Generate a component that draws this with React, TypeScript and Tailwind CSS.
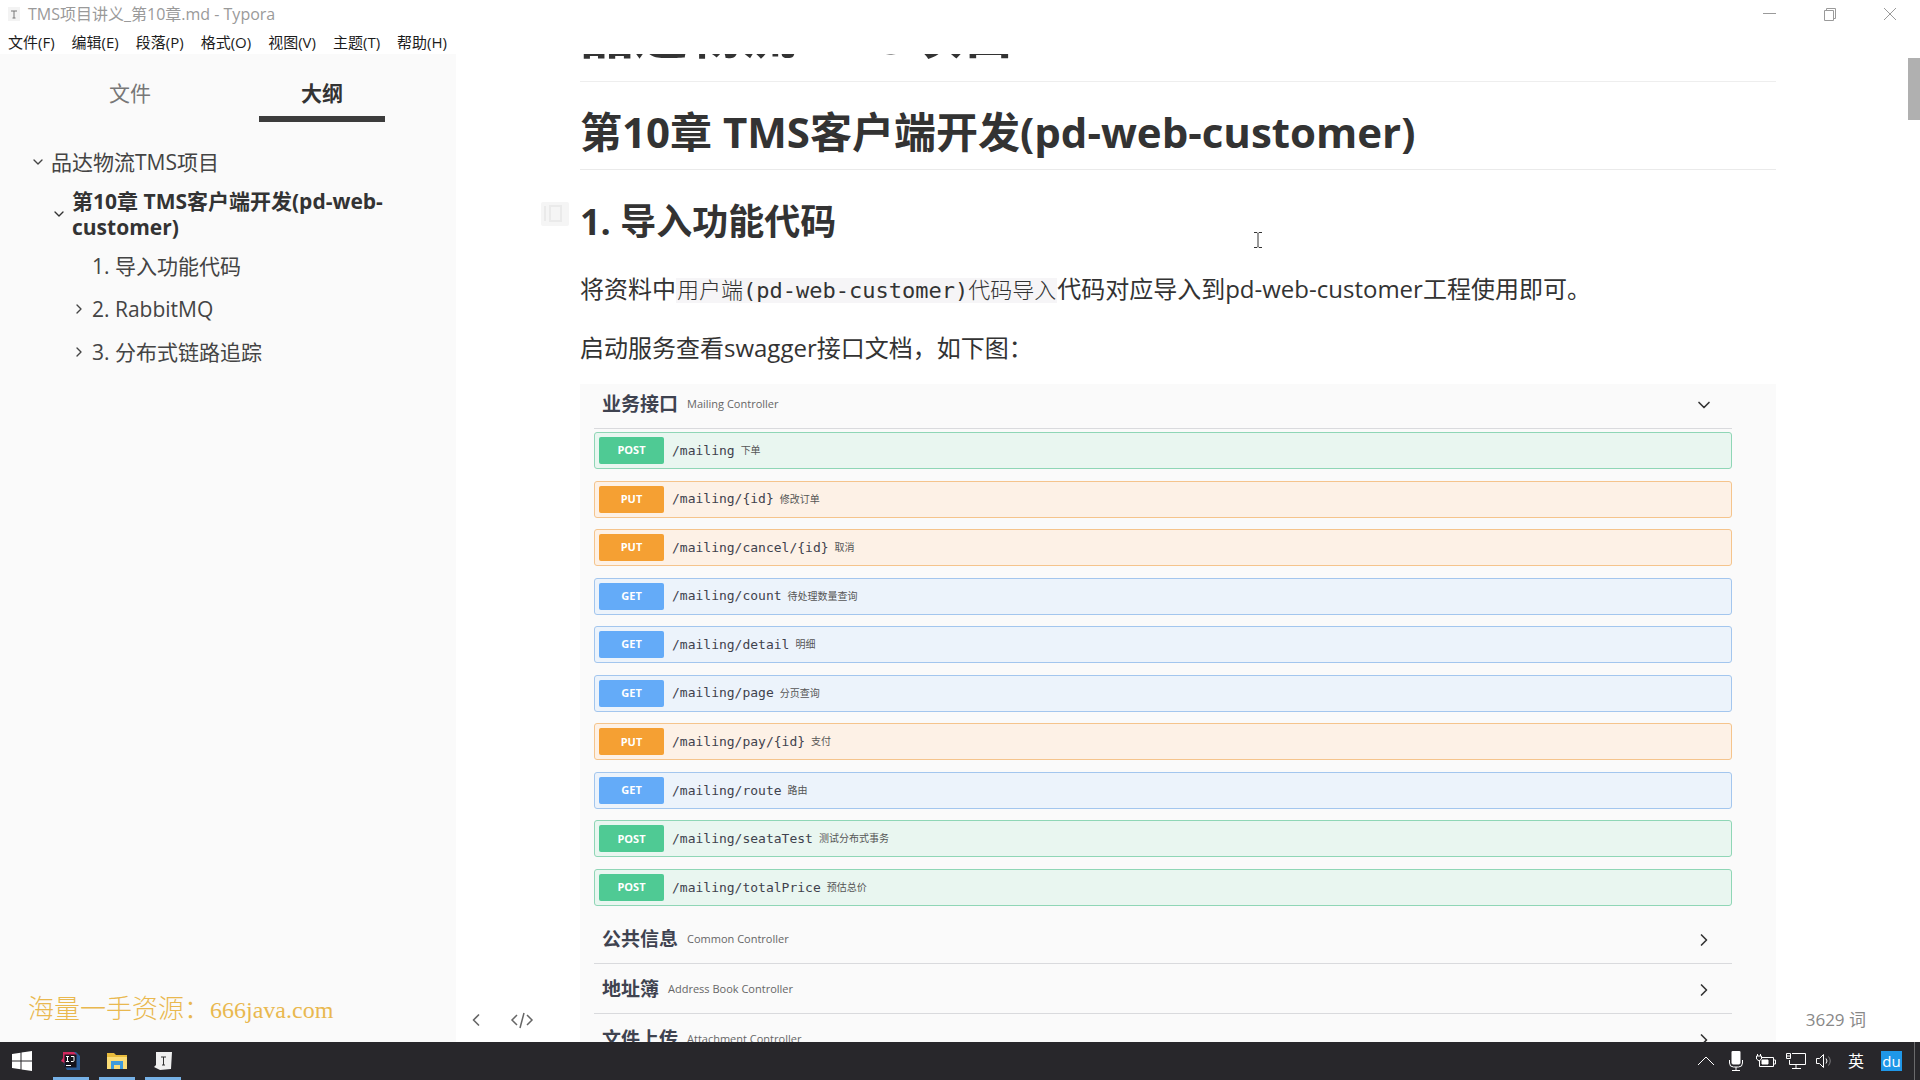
import type { ReactNode } from 'react';
import { ChevronDown, ChevronLeft, ChevronRight } from 'lucide-react';

type Method = 'POST' | 'PUT' | 'GET';

const MENUS = ['文件(F)', '编辑(E)', '段落(P)', '格式(O)', '视图(V)', '主题(T)', '帮助(H)'];

const ENDPOINTS: { method: Method; path: string; desc: string }[] = [
  { method: 'POST', path: '/mailing', desc: '下单' },
  { method: 'PUT', path: '/mailing/{id}', desc: '修改订单' },
  { method: 'PUT', path: '/mailing/cancel/{id}', desc: '取消' },
  { method: 'GET', path: '/mailing/count', desc: '待处理数量查询' },
  { method: 'GET', path: '/mailing/detail', desc: '明细' },
  { method: 'GET', path: '/mailing/page', desc: '分页查询' },
  { method: 'PUT', path: '/mailing/pay/{id}', desc: '支付' },
  { method: 'GET', path: '/mailing/route', desc: '路由' },
  { method: 'POST', path: '/mailing/seataTest', desc: '测试分布式事务' },
  { method: 'POST', path: '/mailing/totalPrice', desc: '预估总价' },
];

const ROW_STYLE: Record<Method, string> = {
  POST: 'border-[#8fd6b6] bg-[#e9f6f0]',
  PUT: 'border-[#f5c48c] bg-[#fdf1e6]',
  GET: 'border-[#a3c6ee] bg-[#ecf3fb]',
};

const BADGE_STYLE: Record<Method, string> = {
  POST: 'bg-[#4fca94]',
  PUT: 'bg-[#f5a033]',
  GET: 'bg-[#64abf8]',
};

function TitleBar() {
  return (
    <header className="flex h-[30px] shrink-0 items-center justify-between pb-0.5 pl-2 text-[#9a9a9a]">
      <div className="flex items-center gap-2">
        <svg className="h-4 w-3" viewBox="0 0 12 16" fill="none">
          <path d="M0 1h12v14H0z" fill="#f3f3f3" />
          <path d="M3 5h6M6 5v7M4.500 12h3" stroke="#777" />
        </svg>
        <span className="text-base">TMS项目讲义_第10章.md - Typora</span>
      </div>
      <div className="flex">
        <button aria-label="最小化" className="flex w-[60px] justify-center">
          <svg className="size-4" viewBox="0 0 16 16" fill="none" stroke="currentColor">
            <path d="M1 7.500h13" />
          </svg>
        </button>
        <button aria-label="还原" className="flex w-[60px] justify-center">
          <svg className="size-4" viewBox="0 0 16 16" fill="none" stroke="currentColor">
            <path d="M2.500 4.500h9v10h-9zM4.500 4.500v-2h9v10h-2" />
          </svg>
        </button>
        <button aria-label="关闭" className="flex w-[60px] justify-center">
          <svg className="size-4" viewBox="0 0 16 16" fill="none" stroke="currentColor">
            <path d="M2 2l12 12M14 2L2 14" />
          </svg>
        </button>
      </div>
    </header>
  );
}

function MenuBar() {
  return (
    <nav className="flex h-6 shrink-0 items-center gap-[17px] pl-2 text-[15px] text-[#1c1c1c]">
      {MENUS.map((menu) => (
        <button key={menu}>{menu}</button>
      ))}
    </nav>
  );
}

function OutlineItem({ indent, icon, children }: { indent: string; icon?: ReactNode; children: ReactNode }) {
  return (
    <li className={`flex items-center gap-1 ${indent}`}>
      <span className="flex w-[18px] shrink-0 justify-center">{icon}</span>
      <a href="#outline">{children}</a>
    </li>
  );
}

function Sidebar() {
  return (
    <aside className="relative w-[456px] shrink-0 bg-[#fafafa] text-[#444]">
      <div className="grid grid-cols-2 pt-[14px] pr-[38px] pl-[34px] text-[21px]">
        <button className="mx-[33px] h-[54px] border-b-[6px] border-transparent pt-1 text-[#777]">文件</button>
        <button className="mx-[33px] h-[54px] border-b-[6px] border-[#3c3c3c] pt-1 font-bold text-[#333]">大纲</button>
      </div>
      <ul className="mt-[27px] flex flex-col gap-[17px] text-[21px] leading-[26px]">
        <OutlineItem indent="pl-[29px]" icon={<ChevronDown className="size-4" strokeWidth={2} />}>
          品达物流TMS项目
        </OutlineItem>
        <OutlineItem
          indent="-my-1 pl-[50px] pr-12 font-bold text-[#333]"
          icon={<ChevronDown className="size-4" strokeWidth={2} />}
        >
          第10章 TMS客户端开发(pd-web-customer)
        </OutlineItem>
        <OutlineItem indent="pl-[70px]">1. 导入功能代码</OutlineItem>
        <OutlineItem indent="pl-[70px]" icon={<ChevronRight className="size-4" strokeWidth={2} />}>
          2. RabbitMQ
        </OutlineItem>
        <OutlineItem indent="pl-[70px]" icon={<ChevronRight className="size-4" strokeWidth={2} />}>
          3. 分布式链路追踪
        </OutlineItem>
      </ul>
      <p className="absolute bottom-[14px] left-7 flex items-center font-['Liberation_Serif','Noto_Sans_CJK_SC',serif] leading-9 font-light text-[#e9b84f]">
        <span className="text-[26px]">海量一手资源：</span>
        <span className="text-2xl">666java.com</span>
      </p>
    </aside>
  );
}

function TagHeader({ name, desc, open }: { name: string; desc: string; open?: boolean }) {
  const Arrow = open ? ChevronDown : ChevronRight;
  return (
    <button className="flex h-[50px] w-full items-center gap-[9px] border-b border-[#d9dadd] pt-0.5 pr-[18px] pl-2 text-left">
      <span className="text-[19px] font-bold text-[#3f4350]">{name}</span>
      <span className="text-[11px] text-[#666]">{desc}</span>
      <Arrow className="ml-auto size-5 text-[#333]" strokeWidth={2} />
    </button>
  );
}

function Swagger() {
  return (
    <section className="mt-4 bg-[#fafafa] pr-11 pl-[14px]">
      <div className="h-[45px] overflow-hidden">
        <div className="-mt-[5px]">
          <TagHeader name="业务接口" desc="Mailing Controller" open />
        </div>
      </div>
      <div className="mt-[3px] mb-2 flex h-[474px] flex-col justify-between">
        {ENDPOINTS.map(({ method, path, desc }) => (
          <button
            key={path}
            className={`flex h-[37px] w-full items-center rounded-[3px] border px-1 text-left ${ROW_STYLE[method]}`}
          >
            <span
              className={`flex h-[27px] w-[65px] items-center justify-center rounded-[2px] text-[11px] font-bold text-white ${BADGE_STYLE[method]}`}
            >
              {method}
            </span>
            <span className="ml-2 font-['DejaVu_Sans_Mono',monospace] text-[13px] text-[#3f424d]">{path}</span>
            <span className="ml-1.5 text-[10px] text-[#555]">{desc}</span>
          </button>
        ))}
      </div>
      <TagHeader name="公共信息" desc="Common Controller" />
      <TagHeader name="地址簿" desc="Address Book Controller" />
      <TagHeader name="文件上传" desc="Attachment Controller" />
    </section>
  );
}

function Document() {
  return (
    <main className="relative min-w-0 flex-1 overflow-hidden bg-white text-[#333]">
      <article className="-mt-[54px] pr-36 pl-31">
        <h1 className="border-b border-[#eee] pb-[15px] text-[54px] leading-[66px] font-bold">品达物流TMS项目</h1>
        <h2 className="mt-[22px] border-b border-[#eaeaea] pb-[9px] text-[42px] leading-[56px] font-bold">
          第10章 TMS客户端开发(pd-web-customer)
        </h2>
        <div className="relative mt-7">
          <svg className="absolute top-1 -left-[39px] h-6 w-7" viewBox="0 0 28 24" fill="none">
            <rect width="28" height="24" rx="2" fill="#f5f5f5" />
            <path d="M9 4h11v15H9zM4 4v15" stroke="#eaeaea" strokeWidth="2" />
          </svg>
          <h3 className="text-[36px] leading-[48px] font-bold">1. 导入功能代码</h3>
        </div>
        <p className="mt-[23px] text-2xl leading-[40px]">
          将资料中
          <code className="bg-[#f6f5f7] px-px font-['DejaVu_Sans_Mono','Noto_Sans_CJK_SC',monospace] text-[22px] font-light">
            用户端(pd-web-customer)代码导入
          </code>
          代码对应导入到pd-web-customer工程使用即可。
        </p>
        <p className="mt-[17px] text-2xl leading-[40px]">启动服务查看swagger接口文档，如下图：</p>
        <Swagger />
      </article>

      {/* Mouse caret, scrollbar thumb and the status items float over the text */}
      <svg className="absolute top-[178px] left-[797px] h-4 w-2.5" viewBox="0 0 10 16" fill="none" stroke="#333">
        <path d="M1 .5h3l1 1 1-1h3M5 1.500v13M1 15.500h3l1-1 1 1h3" />
      </svg>
      <div className="absolute top-1 right-0 h-[62px] w-3 bg-[#b0b0b0]" />
      <div className="absolute bottom-2.5 left-2.5 flex items-center gap-6 text-[#666]">
        <button aria-label="隐藏侧边栏">
          <ChevronLeft className="size-5" strokeWidth={2} />
        </button>
        <button aria-label="源代码模式">
          <svg className="h-6 w-6" viewBox="0 0 24 24" fill="none" stroke="currentColor" strokeWidth="1.5">
            <path d="M7 7l-5 5 5 5M17 7l5 5-5 5M14 5l-4 15" />
          </svg>
        </button>
      </div>
      <button className="absolute right-[54px] bottom-2.5 text-[17px] text-[#888]">3629 词</button>
    </main>
  );
}

function TaskButton({ label, children }: { label: string; children: ReactNode }) {
  return (
    <button
      aria-label={label}
      className="flex h-full w-9 items-center justify-center border-b-[3px] border-[#76b1e6] pt-[3px]"
    >
      {children}
    </button>
  );
}

function Taskbar() {
  return (
    <footer className="flex h-[38px] shrink-0 items-center justify-between bg-[#28272b] text-white">
      <div className="flex h-full items-center gap-2.5">
        <button aria-label="开始" className="flex w-[43px] justify-center">
          <svg className="size-5" viewBox="0 0 20 20" fill="#fff">
            <path d="M0 3l8.500-1.200v7.700H0zM9.500 1.600L20 0v9.500H9.500zM0 10.500h8.500v7.700L0 17zM9.500 10.500H20V20L9.500 18.400z" />
          </svg>
        </button>
        <TaskButton label="IntelliJ IDEA">
          <svg className="size-5" viewBox="0 0 20 20" fill="none">
            <path d="M2 1l13 0 4 4v14H6l-3-5z" fill="#2a5c98" />
            <path d="M2 1l11 0 3 3L5 13l-5-3 2-3z" fill="#d3295f" />
            <path d="M3.500 3.500h12v13h-12z" fill="#15131c" />
            <path d="M5 5.500h3M6.500 5.500v5M5 10.500h3M10 5.500h3v4q0 1-1 1h-2M5 14.500h5" stroke="#fff" />
          </svg>
        </TaskButton>
        <TaskButton label="文件资源管理器">
          <svg className="h-[18px] w-5" viewBox="0 0 20 18">
            <path d="M0 1h7l2 2h11v14H0z" fill="#e8bb3c" />
            <path d="M0 5h20v12H0z" fill="#fbdc76" />
            <path d="M4 9h12v8h-3v-4H7v4H4z" fill="#3f9bdc" />
          </svg>
        </TaskButton>
        <TaskButton label="Typora">
          <svg className="h-[18px] w-[18px]" viewBox="0 0 18 18" fill="none">
            <path d="M2 0h16l-1 17-11 1-6-3 2-2z" fill="#f0f0f0" />
            <path d="M7 5h5M9.500 5v8M8 13h3" stroke="#333" />
          </svg>
        </TaskButton>
      </div>
      <div className="flex h-full items-center">
        <button aria-label="显示隐藏的图标" className="flex w-[30px] justify-center">
          <svg className="h-4 w-[18px]" viewBox="0 0 18 16" fill="none" stroke="#fff">
            <path d="M1 12l8-8 8 8" />
          </svg>
        </button>
        <button aria-label="麦克风" className="flex w-[30px] justify-center">
          <svg className="h-5 w-4" viewBox="0 0 16 20" fill="none" stroke="#fff">
            <rect x="4" y="0" width="8" height="13" rx="1" fill="#fff" />
            <path d="M1.500 9v3q0 4 4 4h5q4 0 4-4V9M8 16v3M4 19.500h8" />
          </svg>
        </button>
        <button aria-label="电池" className="flex w-[30px] justify-center">
          <svg className="h-4 w-5" viewBox="0 0 20 16" fill="none" stroke="#fff">
            <path d="M5.500 4.500h12v9h-14V8M17.500 7h2v4h-2M1.500 1v2M4.500 1v2M.5 3h5v3l-2.500 2-2.500-2z" />
            <path d="M6 7h6v4H6z" fill="#fff" />
          </svg>
        </button>
        <button aria-label="网络" className="flex w-[30px] justify-center">
          <svg className="h-[18px] w-5" viewBox="0 0 20 18" fill="none" stroke="#fff">
            <path d="M6 1.500h13.500v11h-16V8M10 12.500v4M6 16.500h9M.5 1.500h4v5h-4zM.5 4h4" />
          </svg>
        </button>
        <button aria-label="音量" className="flex w-[26px] justify-center">
          <svg className="h-4 w-4" viewBox="0 0 16 16" fill="none" stroke="#fff">
            <path d="M.5 5.500h3l4-4v13l-4-4h-3zM10 5.500q2 2.500 0 5" />
            <path d="M12.500 3.500q3.500 4.500 0 9" opacity=".4" />
          </svg>
        </button>
        <button className="w-[38px] text-center text-base">英</button>
        <button className="mr-3 ml-1.5 flex h-5 w-[21px] items-center justify-center bg-[#1f97e8] text-[15px] leading-5">
          du
        </button>
        <span className="mr-[5px] h-full w-px bg-[#6a6a6c]" />
      </div>
    </footer>
  );
}

export default function App() {
  return (
    <div className="flex h-screen flex-col overflow-hidden bg-white font-['Open_Sans','Noto_Sans_CJK_SC',sans-serif]">
      <TitleBar />
      <MenuBar />
      <div className="flex min-h-0 flex-1">
        <Sidebar />
        <Document />
      </div>
      <Taskbar />
    </div>
  );
}
